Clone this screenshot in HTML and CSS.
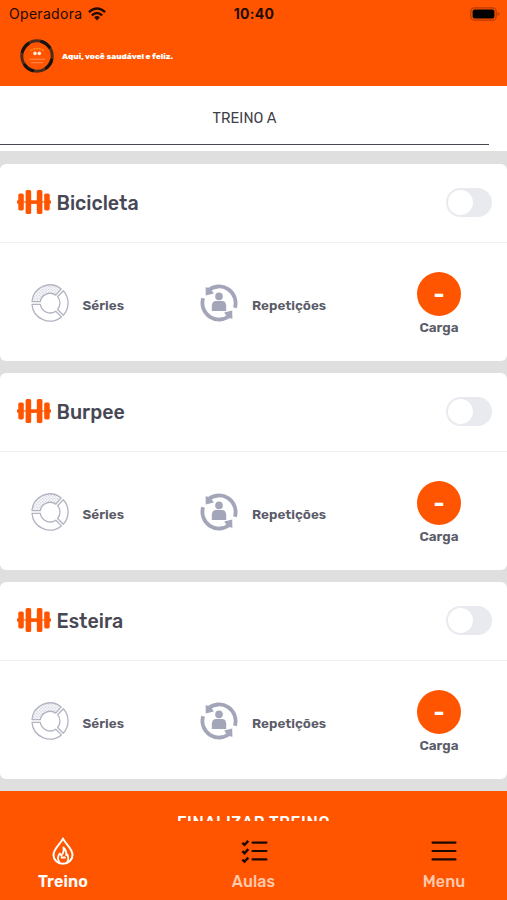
FILE: index.html
```html
<!DOCTYPE html>
<html lang="pt-BR">
  <head>
    <meta charset="UTF-8" />
    <meta name="viewport" content="width=device-width, initial-scale=1.0" />
    <title>Treino</title>
    <link rel="stylesheet" href="styles.css">
  </head>
  <body>
    <!-- Shared icons -->
    <svg class="sprite" width="0" height="0">
      <defs>
        <pattern id="dots" width="3" height="3" patternUnits="userSpaceOnUse">
          <rect width="3" height="3" fill="#f6f6fa" />
          <circle cx="0.8" cy="0.8" r="0.6" fill="#c9cad6" />
          <circle cx="2.3" cy="2.3" r="0.6" fill="#c9cad6" />
        </pattern>
        <symbol id="dumbbell" viewBox="0 0 34 24">
          <rect x="0" y="10.2" width="3" height="3.6" rx="1" />
          <rect x="31" y="10.2" width="3" height="3.6" rx="1" />
          <path fill="#ffa25f" d="M6.5 11h2.5v2h-2.5zM25 11h2.5v2h-2.5z" />
          <path d="M14 10.3h6v3.6h-6z" />
          <rect x="1.3" y="3.6" width="5.5" height="16.8" rx="1.6" />
          <rect x="27.2" y="3.6" width="5.5" height="16.8" rx="1.6" />
          <rect x="8.6" y="0" width="5.6" height="24" rx="1.6" />
          <rect x="19.8" y="0" width="5.6" height="24" rx="1.6" />
        </symbol>
        <symbol id="series" viewBox="0 0 38 38">
          <g fill="none" stroke="#b2b4c2" stroke-width="1.3" stroke-linejoin="round">
            <path fill="url(#dots)" d="M1 17.6A18 18 0 0 1 30.2 4.9L24.8 11.1A10 10 0 0 0 9.3 17.6Z" />
            <path d="M32.3 6.8A18 18 0 0 1 32.3 31.2L26.6 25.5A9.8 9.8 0 0 0 26.6 12.7Z" />
            <path d="M1 20.4H9.3A10 10 0 0 0 24.8 27.2L30.4 32.9A18 18 0 0 1 1 20.4Z" />
          </g>
        </symbol>
        <symbol id="reps" viewBox="0 0 38 38">
          <g fill="none" stroke="#a3a5b9" stroke-width="3.8">
            <path d="M8.4 6.4A16.5 16.5 0 0 1 34.9 23.7" />
            <path d="M29.6 31.6A16.5 16.5 0 0 1 3.1 14.3" />
          </g>
          <g fill="#a3a5b9">
            <path d="M5.6 3.2L5.8 11.4L13.8 9.6L10.4 4.2Z" />
            <path d="M32.4 34.8L32.2 26.600L24.2 28.400L27.600 33.800Z" />
            <circle cx="19" cy="12.4" r="3.8" />
            <path d="M11.8 27V21.4Q12.400 17 16 17H22Q25.600 17 26.200 21.400V27Z" />
          </g>
        </symbol>
      </defs>
    </svg>

    <header class="header">
      <div class="status">
        <div class="carrier">
          <span>Operadora</span>
          <svg class="wifi" viewBox="0 0 18 14">
            <g fill="none" stroke="#240b00" stroke-width="2.3">
              <path d="M.9 5.2Q9-2.2 17.1 5.2" />
              <path d="M3.8 8.4Q9 3.6 14.2 8.4" />
            </g>
            <path fill="#240b00" d="M6.1 10.3Q9 7.9 11.9 10.3L9 13.4Z" />
          </svg>
        </div>
        <div class="clock">10:40</div>
        <svg class="battery" viewBox="0 0 30 14">
          <rect x=".8" y=".8" width="25.4" height="12.4" rx="3.8" fill="none" stroke="#b83b00" stroke-width="1.3" />
          <rect x="2.6" y="2.5" width="21.8" height="9" rx="2" />
          <path fill="#b83b00" d="M27.6 5Q29.6 6 29.6 7T27.6 9Z" />
        </svg>
      </div>
      <div class="brand">
        <svg class="logo" viewBox="0 0 34 34">
          <circle cx="17" cy="17" r="15.2" fill="none" stroke="#4a2c1c" stroke-width="3" />
          <circle cx="17" cy="17" r="15.2" fill="none" stroke="#171310" stroke-width="3.2" stroke-dasharray="12 11.9" stroke-dashoffset="-3" />
          <path d="M10.5 11.5Q17 7.5 23.5 11.5" fill="none" stroke="#ffa022" stroke-width="1.3" stroke-dasharray="2 1" />
          <circle cx="15" cy="14.4" r="1.8" fill="#ffe9dc" />
          <circle cx="19.3" cy="14.4" r="1.8" fill="#ffe9dc" />
          <path d="M9 20.2H25M11 23.7H23" stroke="#ff9c6a" stroke-width=".8" />
        </svg>
        <span class="slogan">Aqui, você saudável e feliz.</span>
      </div>
    </header>

    <nav class="tabs">
      <div class="tab">TREINO A</div>
    </nav>

    <main class="exercises">
      <section class="card">
        <div class="card-head">
          <svg class="dumbbell"><use href="#dumbbell" /></svg>
          <h2 class="name">Bicicleta</h2>
          <span class="switch"><span class="knob"></span></span>
        </div>
        <div class="card-body">
          <div class="info">
            <svg class="info-icon"><use href="#series" /></svg>
            <span class="label">Séries</span>
          </div>
          <div class="info">
            <svg class="info-icon"><use href="#reps" /></svg>
            <span class="label">Repetições</span>
          </div>
          <div class="load">
            <div class="load-value">-</div>
            <span class="label">Carga</span>
          </div>
        </div>
      </section>

      <section class="card">
        <div class="card-head">
          <svg class="dumbbell"><use href="#dumbbell" /></svg>
          <h2 class="name">Burpee</h2>
          <span class="switch"><span class="knob"></span></span>
        </div>
        <div class="card-body">
          <div class="info">
            <svg class="info-icon"><use href="#series" /></svg>
            <span class="label">Séries</span>
          </div>
          <div class="info">
            <svg class="info-icon"><use href="#reps" /></svg>
            <span class="label">Repetições</span>
          </div>
          <div class="load">
            <div class="load-value">-</div>
            <span class="label">Carga</span>
          </div>
        </div>
      </section>

      <section class="card">
        <div class="card-head">
          <svg class="dumbbell"><use href="#dumbbell" /></svg>
          <h2 class="name">Esteira</h2>
          <span class="switch"><span class="knob"></span></span>
        </div>
        <div class="card-body">
          <div class="info">
            <svg class="info-icon"><use href="#series" /></svg>
            <span class="label">Séries</span>
          </div>
          <div class="info">
            <svg class="info-icon"><use href="#reps" /></svg>
            <span class="label">Repetições</span>
          </div>
          <div class="load">
            <div class="load-value">-</div>
            <span class="label">Carga</span>
          </div>
        </div>
      </section>
    </main>

    <div class="finish">FINALIZAR TREINO</div>

    <footer class="menu">
      <div class="menu-item active">
        <svg class="menu-icon" viewBox="0 0 28 28" fill="none" stroke="#fff" stroke-width="2" stroke-linejoin="round" stroke-linecap="round">
          <path d="M14 1.5C12 6.5 4.5 11.5 4.5 18A9.5 8.8 0 0 0 23.5 18C23.5 11.5 16 6.5 14 1.5Z" />
          <path d="M10.4 25.5C8 21.5 9 18.5 10.8 16.5L12.3 18.5C14.8 16 15 13.5 14.4 10.5C17 13 17.5 15.5 17.2 18L18.3 17.5C19.8 20.5 19.3 23.5 17.8 25.5M12.5 20.5H16" stroke-width="1.8" />
        </svg>
        <span class="menu-label">Treino</span>
      </div>
      <div class="menu-item">
        <svg class="menu-icon" viewBox="0 0 28 28" fill="none" stroke="#1d0900">
          <path d="M12.5 5.6H26.5M12.5 14H26.5M12.5 22.4H26.5" stroke-width="2.1" stroke-linecap="round" />
          <path d="M2.3 5.8L4.5 7.8L8.3 3.8M2.3 14.2L4.5 16.2L8.3 12.2M2.3 22.6L4.5 24.6L8.3 20.6" stroke-width="2.5" />
        </svg>
        <span class="menu-label">Aulas</span>
      </div>
      <div class="menu-item">
        <svg class="menu-icon" viewBox="0 0 28 28" stroke="#1d0900" stroke-width="2.1" stroke-linecap="round">
          <path d="M2.5 5.6H25.5M2.5 14H25.5M2.5 22.4H25.5" />
        </svg>
        <span class="menu-label">Menu</span>
      </div>
    </footer>
  </body>
</html>
```
FILE: styles.css
```css
* {
  box-sizing: border-box;
}
body {
  margin: 0;
  height: 100vh;
  overflow: hidden;
  display: flex;
  flex-direction: column;
  background-color: #dfdfdf;
  color: #484855;
  font-family: Rubik, Roboto, "Liberation Sans", sans-serif;
}
.sprite {
  position: absolute;
}

/* Header */
.header {
  height: 86px;
  flex-shrink: 0;
  background-color: #ff5500;
}
.status {
  height: 27px;
  padding: 0 7px 0 9px;
  display: grid;
  grid-template-columns: 1fr auto 1fr;
  align-items: center;
  color: #240b00;
  font-family: Inter, sans-serif;
  font-size: 14px;
}
.carrier {
  display: flex;
  align-items: center;
  gap: 6px;
  letter-spacing: 0.3px;
}
.wifi {
  width: 18px;
  height: 14px;
}
.clock {
  margin-right: 1px;
  font-weight: 700;
  letter-spacing: 0.3px;
}
.battery {
  width: 30px;
  height: 14px;
  justify-self: end;
}
.brand {
  display: flex;
  align-items: center;
  gap: 8px;
  height: 57px;
  padding-left: 20px;
}
.logo {
  width: 34px;
  height: 34px;
}
.slogan {
  padding-top: 1px;
  color: #fff;
  font-size: 8.2px;
  font-weight: 800;
}

/* Workout tabs */
.tabs {
  height: 64.5px;
  flex-shrink: 0;
  background-color: #fff;
}
.tab {
  width: 489px;
  height: 59px;
  padding-top: 6px;
  display: flex;
  justify-content: center;
  align-items: center;
  border-bottom: 1px solid #484855;
  font-size: 14.5px;
  letter-spacing: 0.1px;
  color: #3f3f4a;
}

/* Exercise cards */
.exercises {
  padding-top: 13px;
  display: flex;
  flex-direction: column;
  flex-shrink: 0;
  gap: 12px;
}
.card {
  height: 197px;
  border-radius: 6px;
  background-color: #fff;
}
.card-head {
  height: 79px;
  padding: 0 15px 0 16.5px;
  display: flex;
  align-items: center;
  border-bottom: 1px solid #f0f0f1;
}
.dumbbell {
  width: 34px;
  height: 24px;
  margin-right: 6px;
  margin-bottom: 2px;
  fill: #ff5500;
}
.name {
  margin: 0;
  padding-top: 1px;
  flex-grow: 1;
  font-size: 19.6px;
  font-weight: 500;
}
.switch {
  width: 46px;
  height: 29px;
  padding: 2px;
  border-radius: 15px;
  background-color: #e8eaef;
}
.knob {
  display: block;
  width: 25px;
  height: 25px;
  border-radius: 50%;
  background-color: #fff;
}
.card-body {
  height: 118px;
  padding: 3px 46px 0 30.5px;
  display: grid;
  grid-template-columns: 169.5px 1fr 44px;
  align-items: center;
}
.info {
  display: flex;
  align-items: center;
  gap: 14px;
}
.info-icon {
  width: 38px;
  height: 38px;
}
.info .label {
  padding-top: 3px;
}
.label {
  font-size: 13.5px;
  font-weight: 600;
  color: #5b5b69;
}
.load {
  display: flex;
  flex-direction: column;
  align-items: center;
  gap: 3px;
}
.load-value {
  width: 44px;
  height: 44px;
  border-radius: 50%;
  display: flex;
  justify-content: center;
  align-items: center;
  background-color: #ff5500;
  color: #fff;
  font-size: 23px;
  font-weight: 700;
}

/* Finish button, partly under the menu */
.finish {
  height: 30px;
  margin-top: 12.5px;
  padding-top: 22px;
  flex-shrink: 0;
  overflow: hidden;
  background-color: #ff5500;
  color: #fff;
  font-size: 16px;
  font-weight: 500;
  line-height: 19px;
  letter-spacing: 0.6px;
  text-align: center;
}

/* Bottom menu */
.menu {
  flex-grow: 1;
  padding: 16px 18px 0 18px;
  display: flex;
  justify-content: space-between;
  background-color: #ff5500;
}
.menu-item {
  width: 90px;
  display: flex;
  flex-direction: column;
  align-items: center;
  gap: 7px;
  color: #ffc9ad;
}
.menu-item.active {
  color: #fff;
}
.menu-icon {
  width: 28px;
  height: 28px;
}
.menu-label {
  font-size: 16px;
  font-weight: 500;
  letter-spacing: 0.1px;
}
.active .menu-label {
  font-weight: 600;
}
```
